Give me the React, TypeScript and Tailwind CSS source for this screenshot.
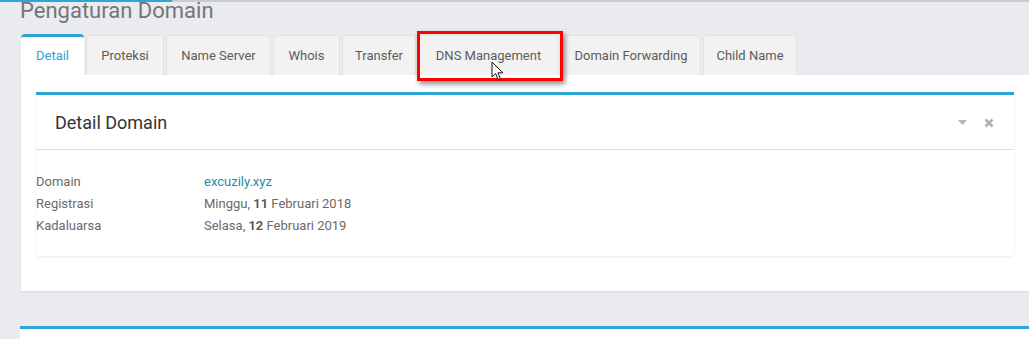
const tabs = [
  { label: "Detail", w: "w-[63px]", active: true },
  { label: "Proteksi", w: "w-[78px]" },
  { label: "Name Server", w: "w-[105px]" },
  { label: "Whois", w: "w-[67px]" },
  { label: "Transfer", w: "w-[74px]" },
  { label: "DNS Management", w: "w-[141px]" },
  { label: "Domain Forwarding", w: "w-[140px]" },
  { label: "Child Name", w: "w-[94px]" },
];

function Cursor() {
  return (
    <svg width="14" height="21" viewBox="0 0 14 21" className="absolute left-[491px] top-[61px]">
      <path
        d="M1 1 L1 16 L4.6 12.6 L7.2 18.6 L9.4 17.6 L6.9 11.8 L11.8 11.8 Z"
        fill="#fff"
        stroke="#111"
        strokeWidth="1"
        strokeLinejoin="round"
      />
    </svg>
  );
}

export default function App() {
  return (
    <div className="relative w-[1029px] h-[339px] overflow-hidden bg-[#e9ebee] font-['Roboto',sans-serif]">
      <div className="flex h-[2px]">
        <div className="w-[172px] bg-[#2fa4d7]" />
        <div className="flex-1 bg-[#c9cbce]" />
      </div>

      <h1 className="mt-[-1px] pl-[20px] text-[22px] leading-[20px] text-[#757575]">Pengaturan Domain</h1>

      <div className="mt-[13px] ml-[21px] flex gap-[2px] items-end h-[41px]">
        {tabs.map((t) =>
          t.active ? (
            <div
              key={t.label}
              className={`${t.w} h-[41px] bg-white border-t-[3px] border-[#2fa4d7] rounded-t-[4px] flex items-center justify-center text-[13px] text-[#2fa4d7]`}
            >
              {t.label}
            </div>
          ) : (
            <div
              key={t.label}
              className={`${t.w} h-[40px] bg-[#f2f2f2] border border-b-0 border-[#e2e2e2] rounded-t-[4px] flex items-center justify-center text-[13px] text-[#5c5c5c]`}
            >
              {t.label}
            </div>
          )
        )}
      </div>

      <div className="ml-[21px] bg-white pt-[17px] px-[15px] pb-[35px] shadow-[0_1px_2px_rgba(0,0,0,0.08)]">
        <div className="border-t-[3px] border-[#2fa4d7] rounded-b-[4px] shadow-[0_1px_3px_rgba(0,0,0,0.08)]">
          <div className="h-[55px] flex items-center justify-between pl-[19px] pr-[20px] border-b border-[#dddddd]">
            <span className="text-[18px] text-[#333]">Detail Domain</span>
            <div className="flex items-center gap-[17px] pt-[1px]">
              <svg width="9" height="5" viewBox="0 0 9 5">
                <path d="M0 0 H9 L4.5 5 Z" fill="#b5b5b5" />
              </svg>
              <svg width="10" height="10" viewBox="0 0 10 10">
                <path d="M1.5 1.5 L8.5 8.5 M8.5 1.5 L1.5 8.5" stroke="#b0b0b0" strokeWidth="2.6" />
              </svg>
            </div>
          </div>
          <div className="pt-[21px] pb-[19px] text-[13px] leading-[22px] text-[#6a6a6a]">
            <div className="flex">
              <span className="w-[168px]">Domain</span>
              <span className="text-[#1f8aa8]">excuzily.xyz</span>
            </div>
            <div className="flex">
              <span className="w-[168px]">Registrasi</span>
              <span>
                Minggu, <b className="font-semibold text-[#555]">11</b> Februari 2018
              </span>
            </div>
            <div className="flex">
              <span className="w-[168px]">Kadaluarsa</span>
              <span>
                Selasa, <b className="font-semibold text-[#555]">12</b> Februari 2019
              </span>
            </div>
          </div>
        </div>
      </div>

      <div className="mt-[35px] ml-[20px] h-[20px] bg-white border-t-[3px] border-[#2fa4d7]" />

      <div className="absolute left-[417px] top-[31px] w-[146px] h-[50px] border-[3px] border-[#ff0000] shadow-[2px_3px_5px_rgba(0,0,0,0.45)]" />
      <Cursor />
    </div>
  );
}
